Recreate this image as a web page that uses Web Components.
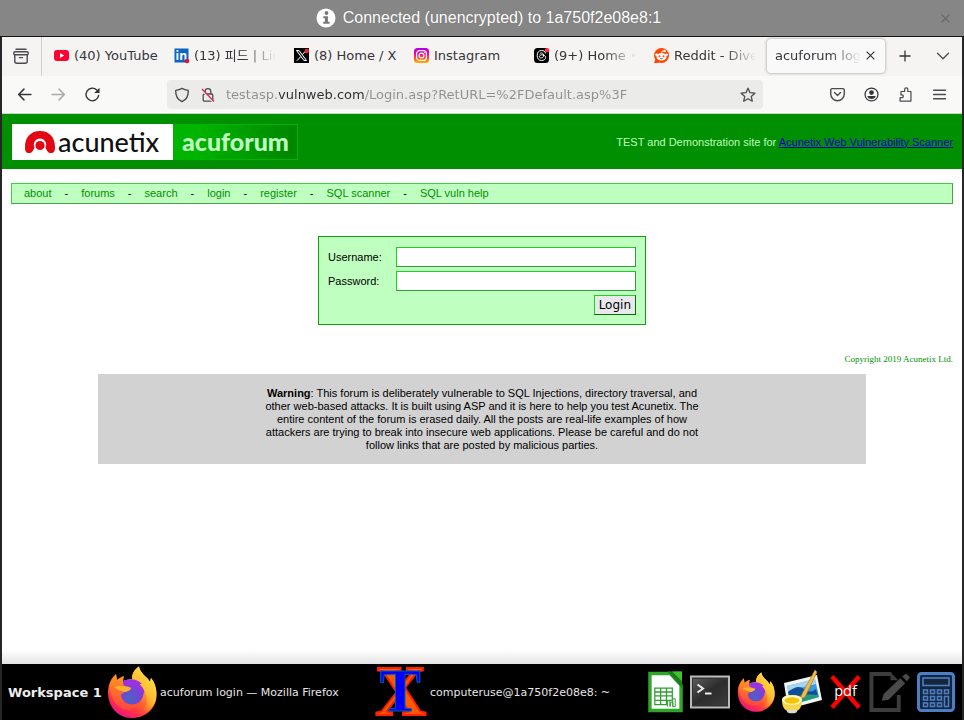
<!DOCTYPE html>
<html lang="en">
<head>
<meta charset="utf-8">
<title>acuforum login</title>
<style>
  html, body { margin: 0; }
  body {
    min-height: 100vh; display: flex; flex-direction: column; background: #262626;
    font-family: "DejaVu Sans", "Noto Sans CJK KR", sans-serif; font-size: 12px; color: #35353a;
  }
  remote-desktop { flex: 1; }
</style>
</head>
<body>
<remote-desktop></remote-desktop>

<script>
const define = (name, html) => {
  const tpl = document.createElement('template');
  tpl.innerHTML = html;
  customElements.define(name, class extends HTMLElement {
    constructor() {
      super();
      this.attachShadow({ mode: 'open' }).append(tpl.content.cloneNode(true));
    }
  });
};

/* ---------- icons ---------- */
const glyphs = {
  info: ['0 0 20 20', '<circle cx="10" cy="10" r="9.5" fill="#fff"/><circle cx="10.5" cy="5" r="1.9" fill="#777"/><path d="M7.3 8.2h4.6v5.6h1.6v2H7.2v-2h1.7v-3.6H7.3z" fill="#777"/>'],
  cross: ['0 0 10 10', '<path d="M1.5 1.5l7 7M8.5 1.5l-7 7" fill="none" stroke="currentColor" stroke-width="1.1"/>'],
  box: ['0 0 16 16', '<g fill="none" stroke="#4b4b50" stroke-width="1.4" stroke-linecap="round" stroke-linejoin="round"><path d="M3 1.2h10"/><rect x=".8" y="3.8" width="14.4" height="3" rx="1.2"/><path d="M1.8 6.8v6.4a2 2 0 0 0 2 2h8.4a2 2 0 0 0 2-2V6.8M6.5 9.6h3"/></g>'],
  youtube: ['0 0 15 15', '<rect x="0" y="2" width="15" height="11" rx="3" fill="#ff0033"/><path d="M6 5v5l4.2-2.5z" fill="#fff"/>'],
  linkedin: ['0 0 15 15', '<rect x=".5" y=".5" width="14" height="14" fill="#0a66c2"/><text x="1.5" y="12" font-family="Open Sans, sans-serif" font-weight="bold" font-size="12" fill="#fff">in</text><circle cx="13" cy="13" r="2.3" fill="#e8112d"/>'],
  x: ['0 0 15 15', '<rect width="15" height="15" fill="#000"/><path d="M2.5 2.5h2.6l7.4 10H9.9z" fill="#222" stroke="#fff" stroke-width="1"/><path d="M12 2.5L8.4 6.6M6.7 8.6L3 12.7" stroke="#fff" fill="none"/><circle cx="12.8" cy="3" r="2.2" fill="#f4212e"/>'],
  instagram: ['0 0 15 15', '<defs><linearGradient id="ig" x1=".5" y1="1" x2=".5" y2="0"><stop offset="0" stop-color="#ffb800"/><stop offset=".3" stop-color="#ff5a20"/><stop offset=".6" stop-color="#ff0190"/><stop offset="1" stop-color="#a800f0"/></linearGradient></defs><rect width="15" height="15" rx="3.5" fill="url(#ig)"/><g fill="none" stroke="#fff" stroke-width="1.2"><rect x="2.6" y="2.6" width="9.8" height="9.8" rx="3"/><circle cx="7.5" cy="7.5" r="2.4"/></g><circle cx="10.5" cy="4.6" r=".7" fill="#fff"/>'],
  threads: ['0 0 15 15', '<rect width="15" height="15" rx="3.5" fill="#000"/><path d="M11.6 5.5C11 3.2 9.5 2.5 7.6 2.5c-3 0-4.4 2-4.4 5s1.5 5 4.4 5c2.2 0 4-1.2 4-3 0-2.1-2.2-2.9-4-2.6-1.6.2-2.3 1-2.2 1.9.2 1.5 3.7 1.7 4.1-.5.3-2-.4-3.3-2-3.3-.9 0-1.5.4-1.9 1" fill="none" stroke="#fff" stroke-width="1"/><circle cx="13" cy="2.3" r="2.3" fill="#ff3040"/>'],
  reddit: ['0 0 15 15', '<circle cx="7.5" cy="7.5" r="7.5" fill="#ff4500"/><path d="M0 15h5l-3.5-4z" fill="#ff4500"/><ellipse cx="7.5" cy="8.8" rx="5" ry="3.7" fill="#fff"/><circle cx="2.5" cy="6.8" r="1.3" fill="#fff"/><circle cx="12.5" cy="6.8" r="1.3" fill="#fff"/><circle cx="10.6" cy="3" r="1.2" fill="#fff"/><path d="M7.5 5.5l.8-2.6 2 .3" fill="none" stroke="#fff" stroke-width=".8"/><circle cx="5.5" cy="8.3" r="1" fill="#ff4500"/><circle cx="9.5" cy="8.3" r="1" fill="#ff4500"/><path d="M5.4 10.4q2.1 1.5 4.2 0z" fill="#222"/>'],
  plus: ['0 0 14 14', '<path d="M7 1.5v11M1.5 7h11" stroke="#35353a" stroke-width="1.3" fill="none"/>'],
  down: ['0 0 14 14', '<path d="M1.5 4.2L7 9.7l5.5-5.5" stroke="#4b4b50" stroke-width="1.3" fill="none" stroke-linecap="round" stroke-linejoin="round"/>'],
  back: ['0 0 14 14', '<path d="M13 7H1.5M6.5 2l-5 5 5 5" stroke="#35353a" stroke-width="1.4" fill="none" stroke-linecap="round" stroke-linejoin="round"/>'],
  forward: ['0 0 14 14', '<path d="M1 7h11.5M7.5 2l5 5-5 5" stroke="#a9a9aa" stroke-width="1.4" fill="none" stroke-linecap="round" stroke-linejoin="round"/>'],
  reload: ['0 0 14 14', '<path d="M12.7 7.8A5.9 5.9 0 1 1 11 2.8" stroke="#35353a" stroke-width="1.3" fill="none" stroke-linecap="round"/><path d="M13.6.6v5H8.6z" fill="#35353a"/>'],
  shield: ['0 0 14 14', '<path d="M7 1.2c1.7 1 3.4 1.5 5.5 1.8.2 4.6-1.5 8-5.5 9.9C3 11 1.3 7.6 1.5 3 3.6 2.7 5.3 2.2 7 1.2z" stroke="#4b4b50" stroke-width="1.2" fill="none" stroke-linejoin="round"/>'],
  lock: ['0 0 14 16', '<g fill="none" stroke="#4b4b50" stroke-width="1.3"><rect x="2.2" y="7" width="9.6" height="7.2" rx="1.3"/><path d="M4.2 7V4.4a2.8 2.8 0 0 1 5.6 0V7"/></g><path d="M1 3.5l12 12.5" stroke="#ebebea" stroke-width="1.6"/><path d="M1 2l12 12.5" stroke="#e22850" stroke-width="1.3"/>'],
  star: ['0 0 16 16', '<path d="M8 1.2l2 4.5 4.9.5-3.7 3.2 1.1 4.8L8 11.7l-4.3 2.5 1.1-4.8L1.1 6.2 6 5.7z" stroke="#4b4b50" stroke-width="1.3" fill="none" stroke-linejoin="round"/>'],
  pocket: ['0 0 14 14', '<g fill="none" stroke="#4b4b50" stroke-width="1.3" stroke-linecap="round" stroke-linejoin="round"><path d="M2 1.5h10a1.3 1.3 0 0 1 1.3 1.3V6.5A6.3 6.3 0 0 1 .7 6.5V2.8A1.3 1.3 0 0 1 2 1.5z"/><path d="M4.2 5.2L7 7.9l2.8-2.7"/></g>'],
  user: ['0 0 16 16', '<circle cx="8" cy="8" r="6.9" fill="none" stroke="#35353a" stroke-width="1.3"/><circle cx="8" cy="5.9" r="2.5" fill="#35353a"/><path d="M3.5 9.6h9c-.4 2-2.3 3.3-4.5 3.3s-4.1-1.3-4.5-3.3z" fill="#35353a"/>'],
  puzzle: ['0 0 16 16', '<path d="M3.2 4.8h3.9V2.6a1.7 1.7 0 0 1 3.4 0v2.2h3.3v10.2H2.2v-3.6h2a1.5 1.5 0 0 0 0-3h-1z" fill="none" stroke="#4b4b50" stroke-width="1.3" stroke-linejoin="round"/>'],
  menu: ['0 0 14 14', '<path d="M1.5 3h11M1.5 7h11M1.5 11h11" stroke="#4b4b50" stroke-width="1.3" fill="none" stroke-linecap="round"/>'],
  firefox: ['0 0 50 52', `<defs>
    <linearGradient id="f1" x1=".85" y1="0" x2=".25" y2="1"><stop offset=".05" stop-color="#fff44f"/><stop offset=".35" stop-color="#ffa72b"/><stop offset=".62" stop-color="#ff5f2f"/><stop offset=".82" stop-color="#ff2a50"/><stop offset="1" stop-color="#e31587"/></linearGradient>
    <radialGradient id="f2" cx=".4" cy=".75" r=".8"><stop offset="0" stop-color="#4a63c8"/><stop offset=".5" stop-color="#6f48cf"/><stop offset="1" stop-color="#9430f0"/></radialGradient>
    <linearGradient id="f3" x1="1" y1="0" x2=".4" y2="1"><stop offset="0" stop-color="#fff350"/><stop offset=".6" stop-color="#ffbc30"/><stop offset="1" stop-color="#ff8a2c" stop-opacity="0"/></linearGradient>
    <linearGradient id="f4" x1="0" y1="0" x2="0" y2="1"><stop offset="0" stop-color="#ff9a1c"/><stop offset="1" stop-color="#ff4b39"/></linearGradient></defs>
    <path d="M1 26C1 19 4 12 9 8l1 6c2-2 4-3 7-4l-1 5c3-1 6-2 9-2 0-6 3-10 7-12.5C33 6 37 9 41 13l2 3 1-4c4 5 6 11 5.5 18C49 43 38 52 25 52 11 52 1 41 1 26z" fill="url(#f1)"/>
    <path d="M25 13c0-6 3-10 7-12.5C33 6 37 9 41 13l2 3 1-4c5 6 6 14 5 21-2 8-8 14-16 15 8-6 9-18 3-25-4-4-9-5-11-10z" fill="url(#f3)"/>
    <circle cx="25" cy="27" r="11.5" fill="url(#f2)"/>
    <path d="M16 15c6-3 15-2 19 3-2 0-2 0-3 1 4 2 6 5 5 9-1-2-2-3-3-3-4-5-10-7-18-5z" fill="#9a32e4"/>
    <path d="M3 17c2-3 4-6 6-8.5l1 5.5 6-3.5-1 5 2 4c2 1 6 1 7 2 0 2-4 3-6 4-2 1-2 3-4 3 0 5 4 10 11 10 5 0 8-2 10-5-1 7-9 12-17 10C8 41 2 30 3 17z" fill="url(#f4)" opacity=".8"/>
    <path d="M7 21c4-1 9-2 17 1 0 2-3 3-5 4-3 0-8-2-12-5z" fill="#ffb02e"/>`],
  xterm: ['0 0 54 54', '<text x="0" y="51" font-family="Liberation Serif, serif" font-weight="bold" font-size="74" fill="#ff5a00" stroke="#ff1e00" stroke-width="2">X</text><text x="5" y="47" font-family="Liberation Serif, serif" font-weight="bold" font-size="64" fill="#0000ff" stroke="#0060b0" stroke-width="1">T</text>'],
  sheet: ['0 0 36 42', '<path d="M2 2h21l11 12v26H2z" fill="#fff" stroke="#2fa52a" stroke-width="3.5"/><path d="M20 0h15v17z" fill="#1c7d1a"/><path d="M25 0h10v10z" fill="#43c330"/><g stroke="#2f9e33" stroke-width="1.3" fill="none"><path d="M7 17h18v17H7zM7 21h18M7 25h18M7 29.5h18M13 17v17M19 17v17"/></g><path d="M20 36v-6h2.5v6M23 36v-4h2.5v4M25.5 36v-8H28v8z" fill="#fff" stroke="#2f9e33"/>'],
  terminal: ['0 0 40 34', '<defs><linearGradient id="tg" x1="0" y1="0" x2="1" y2="1"><stop offset="0" stop-color="#5a5a5a"/><stop offset=".5" stop-color="#2c2c2c"/><stop offset="1" stop-color="#3c3c3c"/></linearGradient></defs><rect x="1" y="1.5" width="38" height="31" fill="#333" stroke="#bbb" stroke-width="2"/><rect x="3" y="4" width="34" height="26" fill="url(#tg)"/><path d="M7.5 9.5l5.5 4-5.5 4M15 18.5h6.5" fill="none" stroke="#eee" stroke-width="2"/>'],
  paint: ['0 0 40 44', '<path d="M2 13l33-8 5 25-34 9z" fill="#f4f4f4"/><path d="M5 16l28-7 4 18-28 8z" fill="#3a9be0"/><path d="M5 16l28-7 1 5-28 7z" fill="#a4d6f4"/><path d="M6 22q10-8 16-3t12 0l2 7-27 8z" fill="#0f4f98"/><path d="M9 29q10-6 27-4l1 2-28 8z" fill="#1f9a7f"/><path d="M33 0l2 2-12 25-5 2 2-5z" fill="#f1c04a" stroke="#b97b1b" stroke-width=".7"/><path d="M0 30q0-5 10-5t10 5q0 12-10 12T0 30z" fill="#f7d64a"/><ellipse cx="10" cy="30" rx="10" ry="4.8" fill="#fff8d0"/><ellipse cx="10" cy="30.5" rx="7.5" ry="3.2" fill="#f5c400"/><ellipse cx="10" cy="41.5" rx="5" ry="1.8" fill="#d9d9d9"/>'],
  pdf: ['0 0 34 36', '<path d="M3 2l28 32M31 2L3 34" stroke="#f00" stroke-width="4.5" fill="none"/><text x="17" y="22" text-anchor="middle" font-family="Open Sans, sans-serif" font-size="15" fill="#fff">pdf</text>'],
  edit: ['0 0 42 42', '<path d="M23 2.5H2.5v37h28V24" fill="none" stroke="#3c3c3c" stroke-width="4"/><path d="M22 1v8h8z" fill="#3c3c3c"/><path d="M13 30l2-7L32 7l5 5-17 17z" fill="#4a4a4a"/><path d="M34 5l4-3 4 4-3 4z" fill="#4a4a4a"/>'],
  calculator: ['0 0 38 40', '<rect x="1.5" y="1.5" width="35" height="37" rx="3" fill="#16243c" stroke="#4a7fc4" stroke-width="3"/><g fill="none" stroke="#4a7fc4" stroke-width="1.6"><rect x="6" y="6" width="26" height="7.5"/><rect x="6.5" y="18" width="4" height="3.5"/><rect x="13.5" y="18" width="4" height="3.5"/><rect x="20.5" y="18" width="4" height="3.5"/><rect x="27.5" y="18" width="4" height="3.5"/><rect x="6.5" y="24.5" width="4" height="3.5"/><rect x="13.5" y="24.5" width="4" height="3.5"/><rect x="20.5" y="24.5" width="4" height="3.5"/><rect x="6.5" y="31" width="4" height="3.5"/><rect x="13.5" y="31" width="4" height="3.5"/><rect x="20.5" y="31" width="4" height="3.5"/><rect x="27.5" y="24.5" width="4" height="10"/></g>'],
  acunetix: ['0 0 30 22', '<path d="M4 22C1 22 0 20 0 16 0 6 6 0 15 0s15 6 15 16c0 4-1 6-4 6-3 0-4-2-5.5-5.5a6.2 6.2 0 1 0-11 0C8 20 7 22 4 22z" fill="#e30613"/><circle cx="15" cy="14.5" r="4.6" fill="#e30613"/>']
};
customElements.define('ui-icon', class extends HTMLElement {
  constructor() { super(); this.attachShadow({ mode: 'open' }); }
  connectedCallback() {
    const [box, body] = glyphs[this.getAttribute('name')];
    this.shadowRoot.innerHTML = `<style>:host{display:block;flex:none;width:16px;height:16px}svg{display:block;width:100%;height:100%;overflow:visible}</style><svg viewBox="${box}" aria-hidden="true">${body}</svg>`;
  }
});

/* ---------- icon button ---------- */
define('icon-button', `<style>
  :host { display: block; flex: none; }
  button { width: 100%; height: 100%; display: grid; place-items: center; margin: 0; padding: 0; border: 0; background: none; color: inherit; font: inherit; }
</style><button type="button"><slot></slot></button>`);

/* ---------- connection banner ---------- */
define('status-banner', `<style>
  :host { display: grid; grid-template-columns: 1fr auto 1fr; align-items: center; height: 36px; padding-left: 13px; background: #868686; border-bottom: 1px solid #161616; color: #fff; font: 16px/20px "Liberation Sans", sans-serif; }
  p { grid-column: 2; margin: 0; display: flex; align-items: center; gap: 7px; text-shadow: 0 0 1px #666; }
  p ui-icon { width: 20px; height: 20px; }
  icon-button { justify-self: end; width: 16px; height: 16px; margin-right: 11px; color: #666; }
  icon-button ui-icon { width: 11px; height: 11px; }
</style><p role="status"><ui-icon name="info"></ui-icon><slot></slot></p><icon-button><ui-icon name="cross"></ui-icon></icon-button>`);

/* ---------- tabs ---------- */
define('browser-tab', `<style>
  :host { display: flex; min-width: 0; align-items: center; gap: 5px; height: 34px; padding: 0 9px; box-sizing: border-box; }
  :host([full]) { padding-right: 4px; }
  :host([active]) { margin-left: 2px; padding: 0 8px; background: #f9f9fa; border-radius: 4px; box-shadow: 0 0 3px #8e8e92; gap: 2px; }
  button { flex: 1; min-width: 0; border: 0; background: none; padding: 0; margin: 0; font: inherit; line-height: 20px; color: inherit; text-align: left; white-space: nowrap; overflow: hidden;
    -webkit-mask-image: linear-gradient(to left, transparent, #000 32px); mask-image: linear-gradient(to left, transparent, #000 32px); }
  :host([full]) button { -webkit-mask-image: none; mask-image: none; }
  ::slotted(ui-icon) { width: 15px; height: 15px; }
  ::slotted(icon-button) { width: 14px; height: 14px; }
</style><slot name="icon"></slot><button type="button" role="tab"><slot></slot></button><slot name="close"></slot>`);

define('tab-strip', `<style>
  :host { display: flex; align-items: stretch; height: 39px; background: #f5f4f2; font-size: 13px; }
  .view { box-sizing: content-box; width: 37px; padding: 0 2px 2px 0; border-right: 1px solid #cfcfd0; }
  .tabs { flex: 1; min-width: 0; display: grid; grid-auto-flow: column; grid-auto-columns: minmax(0, 1fr); align-items: center; padding: 0 1px 0 3px; margin-bottom: 2px; }
  .add, .all { width: 38px; margin-bottom: 2px; }
  .add ui-icon, .all ui-icon { width: 14px; height: 14px; }
  .x ui-icon { width: 11px; height: 11px; }
</style>
<icon-button class="view"><ui-icon name="box"></ui-icon></icon-button>
<div class="tabs" role="tablist">
  <browser-tab full><ui-icon slot="icon" name="youtube"></ui-icon>(40) YouTube</browser-tab>
  <browser-tab><ui-icon slot="icon" name="linkedin"></ui-icon>(13) 피드 | Lin</browser-tab>
  <browser-tab full><ui-icon slot="icon" name="x"></ui-icon>(8) Home / X</browser-tab>
  <browser-tab full><ui-icon slot="icon" name="instagram"></ui-icon>Instagram</browser-tab>
  <browser-tab><ui-icon slot="icon" name="threads"></ui-icon>(9+) Home •</browser-tab>
  <browser-tab><ui-icon slot="icon" name="reddit"></ui-icon>Reddit - Dive</browser-tab>
  <browser-tab active>acuforum login<icon-button slot="close" class="x"><ui-icon name="cross"></ui-icon></icon-button></browser-tab>
</div>
<icon-button class="add"><ui-icon name="plus"></ui-icon></icon-button>
<icon-button class="all"><ui-icon name="down"></ui-icon></icon-button>`);

/* ---------- address bar ---------- */
define('nav-toolbar', `<style>
  :host { display: flex; align-items: center; height: 37px; padding: 0 6px 0 5px; background: #f9f9f8; border-bottom: 1px solid #c8d8c8; }
  icon-button { width: 34px; height: 32px; }
  ui-icon { width: 15px; height: 15px; }
  .url { flex: 1; min-width: 0; height: 29px; display: flex; align-items: center; gap: 10px; margin: 0 57px 0 58px; padding: 0 7px; background: #ebebea; border-radius: 4px; box-sizing: border-box; }
  .url icon-button { width: 16px; height: 20px; }
  .url ui-icon { width: 16px; height: 16px; }
  input { flex: 1; min-width: 0; border: 0; margin: 0; padding: 0; height: 24px; font: 13px "DejaVu Sans", sans-serif; outline: 0; color: transparent;
    background: linear-gradient(to right, #909092 53px, #2c2c30 53px 139px, #909092 139px); -webkit-background-clip: text; background-clip: text; }
</style>
<icon-button><ui-icon name="back"></ui-icon></icon-button>
<icon-button><ui-icon name="forward"></ui-icon></icon-button>
<icon-button><ui-icon name="reload"></ui-icon></icon-button>
<div class="url">
  <icon-button><ui-icon name="shield"></ui-icon></icon-button>
  <icon-button><ui-icon name="lock"></ui-icon></icon-button>
  <input type="text" aria-label="Address" spellcheck="false" value="testasp.vulnweb.com/Login.asp?RetURL=%2FDefault.asp%3F">
  <icon-button><ui-icon name="star"></ui-icon></icon-button>
</div>
<icon-button><ui-icon name="pocket"></ui-icon></icon-button>
<icon-button><ui-icon name="user"></ui-icon></icon-button>
<icon-button><ui-icon name="puzzle"></ui-icon></icon-button>
<icon-button><ui-icon name="menu"></ui-icon></icon-button>`);

/* ---------- forum page ---------- */
define('site-header', `<style>
  :host { display: flex; align-items: center; justify-content: space-between; height: 55px; padding: 0 9px 0 10px; background: #008f00; color: #bfffbf; box-sizing: border-box; }
  .logo { display: flex; text-decoration: none; font-family: Lato, sans-serif; line-height: 32px; }
  .brand { display: flex; align-items: center; gap: 3px; width: 161px; height: 36px; box-sizing: border-box; padding-left: 13px; background: #fff; color: #111; font-size: 27px; font-weight: 500; }
  .brand ui-icon { width: 30px; height: 22px; }
  .forum { width: 125px; height: 36px; box-sizing: border-box; border: 1px solid #00b400; text-align: center; font-size: 25px; font-weight: 900; color: #bfffbf; background: linear-gradient(100deg, #00b400 20%, #008700 95%); }
  p { margin: 0; }
  p a { color: #0000c0; }
</style>
<a class="logo" href="#"><span class="brand"><ui-icon name="acunetix"></ui-icon>acunetix</span><span class="forum">acuforum</span></a>
<p>TEST and Demonstration site for <a href="#">Acunetix Web Vulnerability Scanner</a></p>`);

define('site-menu', `<style>
  :host { display: flex; gap: 13px; margin: 14px 9px 0; padding: 0 12px; height: 21px; line-height: 19px; box-sizing: border-box; background: #bfffbf; border: 1px solid; border-color: #3fd03f #4aa04a #4aa04a #3fd03f; color: #000; }
  a { color: #008f00; text-decoration: none; }
</style>
<a href="#">about</a><span>-</span><a href="#">forums</a><span>-</span><a href="#">search</a><span>-</span><a href="#">login</a><span>-</span><a href="#">register</a><span>-</span><a href="#">SQL scanner</a><span>-</span><a href="#">SQL vuln help</a>`);

define('login-form', `<style>
  :host { display: block; align-self: center; margin-top: 32px; }
  form { display: grid; grid-template-columns: 56px 240px; gap: 4px 12px; align-items: center; padding: 10px 9px 9px; background: #bfffbf; border: 1px solid #10a010; color: #000; }
  input { box-sizing: border-box; width: 100%; height: 20px; margin: 0; padding: 1px 3px; background: #fff; border: 1px solid; border-color: #20d020 #2f9a3f #2f9a3f #20d020; font: 12px "DejaVu Sans", sans-serif; }
  button { grid-column: 2; justify-self: end; height: 20px; margin: 0; padding: 0 4px; background: #e9e9ed; border: 1px solid; border-color: #20d020 #007000 #007000 #20d020; font: 12px/18px "DejaVu Sans", sans-serif; color: #000; }
</style>
<form>
  <label for="user">Username:</label><input id="user" type="text">
  <label for="pass">Password:</label><input id="pass" type="password">
  <button type="button">Login</button>
</form>`);

define('site-footer', `<style>
  :host { display: block; }
  .copy { margin: 28px 9px 9px; text-align: right; font: 9px/12px "Liberation Serif", serif; color: #008f00; }
  .note { width: 80%; margin: 0 auto; padding: 13px 0 12px; background: #d2d2d2; box-sizing: content-box; }
  .note p { margin: 0 auto; max-width: 442px; text-align: center; line-height: 13px; color: #000; }
</style>
<p class="copy">Copyright 2019 Acunetix Ltd.</p>
<div class="note"><p><b>Warning</b>: This forum is deliberately vulnerable to SQL Injections, directory traversal, and other web-based attacks. It is built using ASP and it is here to help you test Acunetix. The entire content of the forum is erased daily. All the posts are real-life examples of how attackers are trying to break into insecure web applications. Please be careful and do not follow links that are posted by malicious parties.</p></div>`);

define('forum-page', `<style>
  :host { display: flex; flex-direction: column; background: linear-gradient(to top, #e4e4e4, #fff 14px); font: 11px/14px "Liberation Sans", sans-serif; }
</style>
<site-header></site-header><site-menu></site-menu><login-form></login-form><site-footer></site-footer>`);

/* ---------- taskbar ---------- */
define('task-button', `<style>
  :host { display: block; flex: 1; min-width: 0; }
  button { width: 100%; height: 100%; display: flex; align-items: center; gap: 3px; margin: 0; padding: 0; border: 0; background: none; color: inherit; font: inherit; white-space: nowrap; }
</style><button type="button"><slot></slot></button>`);

define('task-bar', `<style>
  :host { display: flex; align-items: center; height: 56px; background: #000; color: #e6e6e6; font-size: 11px; }
  strong { width: 99px; padding-left: 6px; box-sizing: content-box; font-size: 13px; color: #eee; }
  task-button { height: 56px; }
  task-button ui-icon { width: 50px; height: 52px; }
  task-button .xt { width: 52px; height: 54px; }
  nav { display: flex; align-items: center; gap: 7px; padding: 0 7px 0 5px; }
  .sheet { width: 35px; height: 42px; }
  .terminal { width: 40px; height: 34px; }
  .firefox { width: 38px; height: 40px; }
  .paint { width: 40px; height: 44px; }
  .pdf { width: 33px; height: 36px; }
  .edit { width: 41px; height: 42px; }
  .calculator { width: 38px; height: 40px; }
  nav ui-icon { width: 100%; height: 100%; }
</style>
<strong>Workspace 1</strong>
<task-button><ui-icon name="firefox"></ui-icon>acuforum login — Mozilla Firefox</task-button>
<task-button><ui-icon class="xt" name="xterm"></ui-icon>computeruse@1a750f2e08e8: ~</task-button>
<nav aria-label="Launchers">
  <icon-button class="sheet"><ui-icon name="sheet"></ui-icon></icon-button>
  <icon-button class="terminal"><ui-icon name="terminal"></ui-icon></icon-button>
  <icon-button class="firefox"><ui-icon name="firefox"></ui-icon></icon-button>
  <icon-button class="paint"><ui-icon name="paint"></ui-icon></icon-button>
  <icon-button class="pdf"><ui-icon name="pdf"></ui-icon></icon-button>
  <icon-button class="edit"><ui-icon name="edit"></ui-icon></icon-button>
  <icon-button class="calculator"><ui-icon name="calculator"></ui-icon></icon-button>
</nav>`);

define('remote-desktop', `<style>
  :host { display: flex; flex-direction: column; }
  .screen { flex: 1; display: flex; flex-direction: column; margin: 0 2px; }
  forum-page { flex: 1; }
</style>
<status-banner>Connected (unencrypted) to 1a750f2e08e8:1</status-banner>
<div class="screen"><tab-strip></tab-strip><nav-toolbar></nav-toolbar><forum-page></forum-page><task-bar></task-bar></div>`);
</script>
</body>
</html>
